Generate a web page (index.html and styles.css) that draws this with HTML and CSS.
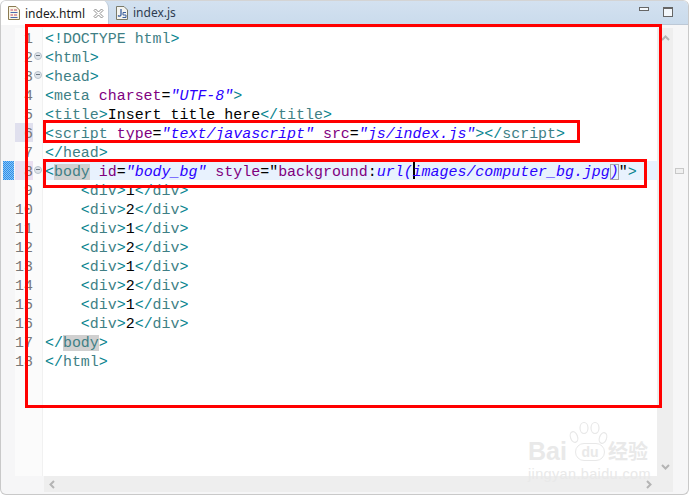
FILE: index.html
```
<!DOCTYPE html>
<html lang="en">
<head>
<meta charset="utf-8">
<title>Editor</title>
<link rel="stylesheet" href="styles.css">
</head>
<body>
<div class="window">
  <div class="tabbar">
    <div class="tab active">
      <svg class="ficon" width="12" height="14" viewBox="0 0 12 14"><path d="M.5.500h7.500l3.500 3.500v9.500h-11z" fill="#fbf6e6" stroke="#8a7a52"/><path d="M2.500 4h2.500M6 4h3" stroke="#c04a6a"/><path d="M2.500 6.500h7" stroke="#4a6ab0"/><path d="M2.500 9h2.500M6 9h3" stroke="#c04a6a"/><path d="M2.500 11.500h7" stroke="#4a6ab0"/></svg>
      <span class="tabname">index.html</span>
      <svg class="close" width="11" height="11" viewBox="0 0 11 11"><path d="M1 2.500 2.500 1 5.500 4 8.500 1 10 2.500 7 5.500 10 8.500 8.500 10 5.500 7 2.500 10 1 8.500 4 5.500z" fill="#fff" stroke="#8a8a8a"/></svg>
    </div>
    <div class="tab">
      <svg class="ficon" width="12" height="14" viewBox="0 0 12 14"><path d="M.5.500h7.500l3.500 3.500v9.500h-11z" fill="#f4f4f0" stroke="#7a7a6a"/><path d="M5 3v5.500c0 2-2 2-3 1" fill="none" stroke="#3a5f9f" stroke-width="1.300"/><path d="M10 6.500h-3v2.500h3v2.500h-3.500" fill="none" stroke="#3a5f9f"/></svg>
      <span class="tabname">index.js</span>
    </div>
    <div class="winbtns">
      <span class="minbtn"></span>
      <span class="maxbtn"></span>
    </div>
  </div>
  <div class="main">
    <div class="markers"><span class="marker"></span></div>
    <div class="editor-col">
      <div class="editor">
        <div class="numbers">
          <div class="num">1</div>
          <div class="num">2<i class="fold"></i></div>
          <div class="num">3<i class="fold"></i></div>
          <div class="num">4</div>
          <div class="num">5</div>
          <div class="num mark6">6</div>
          <div class="num">7</div>
          <div class="num mark8">8<i class="fold"></i></div>
          <div class="num">9</div>
          <div class="num">10</div>
          <div class="num">11</div>
          <div class="num">12</div>
          <div class="num">13</div>
          <div class="num">14</div>
          <div class="num">15</div>
          <div class="num">16</div>
          <div class="num">17</div>
          <div class="num">18</div>
        </div>
        <div class="code">
          <div class="ln"><b class="br">&lt;!</b><b class="tg">DOCTYPE html</b><b class="br">&gt;</b></div>
          <div class="ln"><b class="br">&lt;</b><b class="tg">html</b><b class="br">&gt;</b></div>
          <div class="ln"><b class="br">&lt;</b><b class="tg">head</b><b class="br">&gt;</b></div>
          <div class="ln"><b class="br">&lt;</b><b class="tg">meta</b> <b class="at">charset</b>=<b class="val">"UTF-8"</b><b class="br">&gt;</b></div>
          <div class="ln"><b class="br">&lt;</b><b class="tg">title</b><b class="br">&gt;</b>Insert title here<b class="br">&lt;/</b><b class="tg">title</b><b class="br">&gt;</b></div>
          <div class="ln"><b class="br">&lt;</b><b class="tg">script</b> <b class="at">type</b>=<b class="val">"text/javascript"</b> <b class="at">src</b>=<b class="val">"js/index.js"</b><b class="br">&gt;&lt;/</b><b class="tg">script</b><b class="br">&gt;</b></div>
          <div class="ln"><b class="br">&lt;/</b><b class="tg">head</b><b class="br">&gt;</b></div>
          <div class="ln current"><b class="br">&lt;</b><b class="tg hl">body</b> <b class="at">id</b>=<b class="val">"body_bg"</b> <b class="at">style</b>="<b class="at">background</b>:<b class="val">url(<span class="caret"></span>images/computer_bg.jpg<span class="match">)</span></b>"<b class="br">&gt;</b></div>
          <div class="ln"><b class="br">    &lt;</b><b class="tg">div</b><b class="br">&gt;</b>1<b class="br">&lt;/</b><b class="tg">div</b><b class="br">&gt;</b></div>
          <div class="ln"><b class="br">    &lt;</b><b class="tg">div</b><b class="br">&gt;</b>2<b class="br">&lt;/</b><b class="tg">div</b><b class="br">&gt;</b></div>
          <div class="ln"><b class="br">    &lt;</b><b class="tg">div</b><b class="br">&gt;</b>1<b class="br">&lt;/</b><b class="tg">div</b><b class="br">&gt;</b></div>
          <div class="ln"><b class="br">    &lt;</b><b class="tg">div</b><b class="br">&gt;</b>2<b class="br">&lt;/</b><b class="tg">div</b><b class="br">&gt;</b></div>
          <div class="ln"><b class="br">    &lt;</b><b class="tg">div</b><b class="br">&gt;</b>1<b class="br">&lt;/</b><b class="tg">div</b><b class="br">&gt;</b></div>
          <div class="ln"><b class="br">    &lt;</b><b class="tg">div</b><b class="br">&gt;</b>2<b class="br">&lt;/</b><b class="tg">div</b><b class="br">&gt;</b></div>
          <div class="ln"><b class="br">    &lt;</b><b class="tg">div</b><b class="br">&gt;</b>1<b class="br">&lt;/</b><b class="tg">div</b><b class="br">&gt;</b></div>
          <div class="ln"><b class="br">    &lt;</b><b class="tg">div</b><b class="br">&gt;</b>2<b class="br">&lt;/</b><b class="tg">div</b><b class="br">&gt;</b></div>
          <div class="ln"><b class="br">&lt;/</b><b class="tg hl">body</b><b class="br">&gt;</b></div>
          <div class="ln"><b class="br">&lt;/</b><b class="tg">html</b><b class="br">&gt;</b></div>
        </div>
        <div class="vscroll">
          <svg width="9" height="6" viewBox="0 0 9 6"><path d="M1 5 4.500 1.500 8 5" fill="none" stroke="#b4b4b4" stroke-width="2"/></svg>
          <svg width="9" height="6" viewBox="0 0 9 6"><path d="M1 1 4.500 4.500 8 1" fill="none" stroke="#b4b4b4" stroke-width="2"/></svg>
        </div>
      </div>
      <div class="hscroll">
        <svg width="6" height="9" viewBox="0 0 6 9"><path d="M5 1 1.500 4.500 5 8" fill="none" stroke="#b4b4b4" stroke-width="2"/></svg>
        <svg width="6" height="9" viewBox="0 0 6 9"><path d="M1 1 4.500 4.500 1 8" fill="none" stroke="#b4b4b4" stroke-width="2"/></svg>
      </div>
    </div>
  </div>
</div>
<div class="overview-mark"></div>
<div class="box box-all"></div>
<div class="box box-script"></div>
<div class="box box-body"></div>
<div class="wm">
  <svg class="paw" width="40" height="26" viewBox="0 0 40 26"><g fill="#fff" stroke="#e8e8e8" stroke-width="1.200"><ellipse cx="5" cy="16" rx="3.500" ry="5.500" transform="rotate(-20 5 16)"/><ellipse cx="15" cy="7" rx="4" ry="5.500"/><ellipse cx="26" cy="7" rx="4" ry="5.500"/><ellipse cx="34" cy="17" rx="3.500" ry="5.500" transform="rotate(20 34 17)"/></g></svg>
  <div class="wm-bai">Bai</div>
  <div class="wm-du">du</div>
  <div class="wm-cn">经验</div>
  <div class="wm-url">jingyan.baidu.com</div>
</div>
</body>
</html>
```
FILE: styles.css
```
* { box-sizing: border-box; }
html, body { margin: 0; padding: 0; }
body { width: 689px; height: 495px; overflow: hidden; background: #fff; position: relative; }
.window {
  width: 689px; height: 495px; display: flex; flex-direction: column;
  background: #f6f6f7; border: 1px solid #c9c9c9; border-top-color: #d4d4d4;
  border-radius: 6px; overflow: hidden;
}
.tabbar {
  height: 24px; flex: none; display: flex; align-items: flex-end;
  background: linear-gradient(#d3e1f0, #cadbec);
  border-bottom: 1px solid #bcc8d6;
  font: 12px "Noto Sans", "Open Sans", sans-serif; color: #2e3c50;
}
.tab { height: 24px; display: flex; align-items: center; gap: 5px; padding: 1px 7px 0 7px; }
.tab.active {
  width: 108px; background: #fff; color: #1a1a1a; border-radius: 0 8px 0 0;
  border-right: 1px solid #bcc8d6; margin-bottom: -1px; height: 25px;
}
.ficon { flex: none; }
.tabname { white-space: nowrap; }
.close { flex: none; margin-left: 3px; }
.winbtns { margin-left: auto; display: flex; align-items: flex-start; gap: 14px; padding-right: 15px; height: 24px; padding-top: 7px; }
.minbtn { width: 10px; height: 4px; border: 1px solid #666; background: #f4f8fc; }
.maxbtn { width: 10px; height: 10px; border: 1px solid #666; border-top-width: 2px; background: #f4f8fc; }
.main { flex: 1; display: flex; min-height: 0; padding-top: 3px; }
.markers { width: 14px; flex: none; position: relative; display: flex; flex-direction: column; padding-top: 133px; }
.marker {
  display: block; width: 11px; height: 19px; margin-left: 2px;
  background-color: #2f8fe8;
  background-image: repeating-conic-gradient(#86c4f8 0 25%, #2f8fe8 0 50%);
  background-size: 2px 2px;
}
.editor-col { flex: 1; display: flex; flex-direction: column; min-width: 0; padding-right: 15px; padding-bottom: 2px; }
.editor { flex: 1; display: flex; min-height: 0; background: #fff; }
.numbers {
  width: 28px; flex: none; background: #fbfbfb; border-right: 1px solid #f1f1f1;
  font: 14.950px/19px "Liberation Mono", monospace; color: #787878;
}
.num { height: 19px; width: 18px; padding-top: 2px; text-align: right; position: relative; }
.mark6 { background: #e0e0ee; }
.mark8 { background: #eadff0; }
.fold {
  position: absolute; left: 19px; top: 5px; width: 8px; height: 8px; border-radius: 50%;
  background: #dfe4ea; border: 1px solid #b9c2cc;
}
.fold::after { content: ""; position: absolute; left: 1px; top: 2px; width: 4px; height: 1px; background: #6a7480; }
.code { flex: 1; min-width: 0; padding-left: 2px; font: 14.950px/19px "Liberation Mono", monospace; color: #000; }
.ln { height: 19px; padding-top: 2px; white-space: pre; }
.ln b { font-weight: 400; }
.current { background: #e8f2fe; margin-left: -2px; padding-left: 2px; }
.br { color: #08848f; }
.tg { color: #3f7f85; }
.at { color: #7f007f; }
.val { color: #2a00ff; font-style: italic; }
.hl { background: #d0d0d0; }
.match { outline: 1px solid #a8a8a8; outline-offset: -1px; }
.caret { display: inline-block; width: 2px; height: 18px; margin-top: -2px; background: #000; vertical-align: top; margin-right: -2px; }
.vscroll { width: 16px; flex: none; background: #eee; display: flex; flex-direction: column; justify-content: space-between; align-items: center; padding: 7px 0 6px; }
.hscroll { height: 16px; flex: none; margin-left: 29px; background: #eee; display: flex; justify-content: space-between; align-items: center; padding: 0 21px 0 5px; }
.overview-mark { position: absolute; left: 675px; top: 168px; width: 9px; height: 6px; border: 1px solid #c8c8c8; background: #f0f0f0; }
.box { position: absolute; border: 3px solid #f00; }
.box-all { left: 25px; top: 24px; width: 637px; height: 384px; border-width: 3.500px; }
.box-script { left: 43px; top: 120px; width: 537px; height: 23px; }
.box-body { left: 43px; top: 159px; width: 604px; height: 29px; }
.wm { position: absolute; left: 528px; top: 420px; width: 124px; height: 68px; color: #e9e9e9; font-family: "Liberation Sans", sans-serif; }
.paw { position: absolute; left: 41px; top: 1px; }
.wm-bai { position: absolute; left: 0; top: 18px; font-size: 25px; line-height: 26px; font-weight: 700; }
.wm-du { position: absolute; left: 47px; top: 23px; width: 30px; height: 18px; text-align: center; font-size: 14px; font-weight: 700; line-height: 16px; background: #fff; border: 1px solid #e8e8e8; border-radius: 9px; }
.wm-cn { position: absolute; left: 80px; top: 18px; font: 700 20px/26px "Noto Sans CJK SC", sans-serif; }
.wm-url { position: absolute; left: 0; top: 46px; font-size: 14.500px; line-height: 16px; white-space: nowrap; letter-spacing: .35px; }
```
